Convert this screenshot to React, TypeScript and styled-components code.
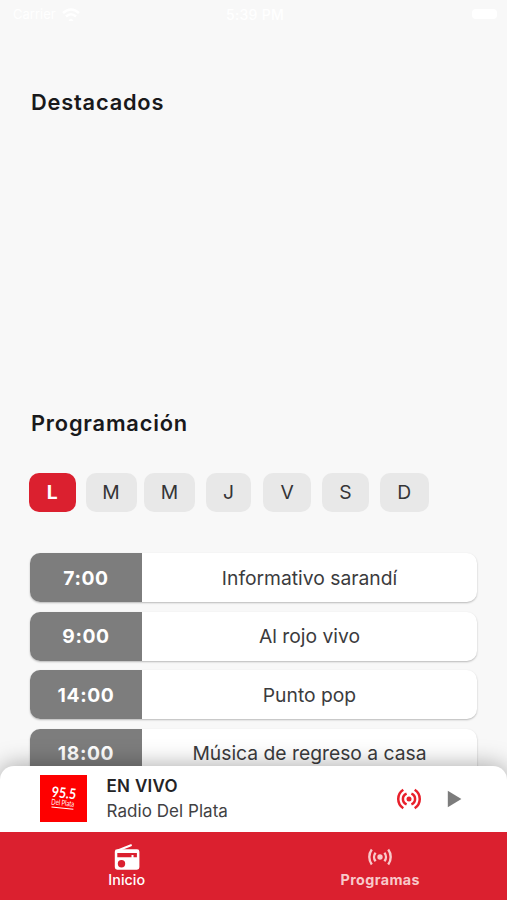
import React from "react";
import styled, { createGlobalStyle } from "styled-components";

const GlobalStyle = createGlobalStyle`
  * { box-sizing: border-box; }
  html, body { margin: 0; padding: 0; background: #f8f8f8; }
  body { font-family: Inter, "Liberation Sans", sans-serif; color: #1c1c1e; overflow: hidden; }
`;

const Screen = styled.main`
  display: flex;
  flex-direction: column;
  width: 507px;
  height: 900px;
  overflow: hidden;
  background: #f8f8f8;
`;

const StatusBar = styled.header`
  flex: none;
  display: grid;
  grid-template-columns: 1fr auto 1fr;
  align-items: center;
  height: 28px;
  padding: 0 10px 0 13px;
  color: #fff;
  font-size: 14px;
`;

const Carrier = styled.div`
  display: flex;
  align-items: center;
  gap: 6px;
  font-size: 13px;
`;

const Clock = styled.time`
  font-weight: 500;
  letter-spacing: 0.3px;
`;

const Battery = styled.span`
  justify-self: end;
  width: 25px;
  height: 10px;
  border-radius: 4px;
  background: #fff;
`;

const Content = styled.div`
  flex: none;
  height: 738px;
  padding: 0 30px;
  overflow: hidden;
`;

const Featured = styled.section`
  height: 321px;
  padding-top: 60px;
`;

const Heading = styled.h2`
  margin: 0 0 0 1px;
  font-size: 21.8px;
  line-height: 28px;
  font-weight: 600;
  letter-spacing: 0.8px;
  color: #19191b;
`;

const Schedule = styled.section`
  padding-top: 60px;
`;

const Days = styled.div`
  display: flex;
  margin: 35.5px 0 41.5px -1px;
`;

const Day = styled.button<{ $width: number; $gap: number; $active?: boolean }>`
  flex: none;
  width: ${(p) => p.$width}px;
  height: 39px;
  margin: 0 ${(p) => p.$gap}px 0 0;
  padding: 0;
  border: 0;
  border-radius: 10px;
  background: ${(p) => (p.$active ? "#db202f" : "#e8e8e8")};
  color: ${(p) => (p.$active ? "#fff" : "#353537")};
  font: ${(p) => (p.$active ? 700 : 400)} 19.3px Inter, sans-serif;
`;

const ProgramList = styled.div`
  display: flex;
  flex-direction: column;
  gap: 9.6px;
`;

const ProgramRow = styled.article`
  flex: none;
  display: grid;
  grid-template-columns: 112px 1fr;
  height: 49px;
  border-radius: 10px;
  overflow: hidden;
  background: #fff;
  box-shadow: 0 1px 2px rgba(0, 0, 0, 0.26);
`;

const Time = styled.div`
  display: grid;
  place-items: center;
  background: #7d7d7d;
  color: #fff;
  font-size: 19.3px;
  font-weight: 700;
  letter-spacing: 0.6px;
`;

const ProgramName = styled.div`
  display: grid;
  place-items: center;
  color: #3b3b3d;
  font-size: 19.3px;
  letter-spacing: 0;
  white-space: nowrap;
`;

const Player = styled.section`
  flex: none;
  position: relative;
  display: flex;
  align-items: center;
  height: 65.5px;
  padding: 0 45px 0 40px;
  border-radius: 14px 14px 0 0;
  background: #fff;
  box-shadow: 0 0 24px rgba(0, 0, 0, 0.36);
`;

const StationLogo = styled.svg`
  flex: none;
  width: 47px;
  height: 47px;
  margin-right: 19.5px;
`;

const Station = styled.div`
  flex: 1;
`;

const LiveLabel = styled.div`
  font-size: 17px;
  font-weight: 600;
  line-height: 25px;
  letter-spacing: 0.3px;
  color: #242426;
`;

const StationName = styled.div`
  font-size: 17px;
  line-height: 25px;
  letter-spacing: 0.05px;
  color: #414143;
`;

const LiveIcon = styled.svg`
  width: 26px;
  height: 26px;
  margin-right: 25px;
`;

const PlayIcon = styled.svg`
  width: 15px;
  height: 18px;
`;

const TabBar = styled.nav`
  flex: none;
  position: relative;
  display: grid;
  grid-template-columns: 1fr 1fr;
  height: 68.5px;
  background: #db202f;
`;

const Tab = styled.a<{ $muted?: boolean }>`
  display: flex;
  flex-direction: column;
  align-items: center;
  padding-top: 11px;
  color: ${(p) => (p.$muted ? "#f8c9ca" : "#fff")};
  font-size: 14.3px;
  font-weight: ${(p) => (p.$muted ? 700 : 500)};
  line-height: 18px;
  letter-spacing: ${(p) => (p.$muted ? 0.4 : 0.05)}px;
`;

const TabIcon = styled.svg`
  width: 28px;
  height: 28px;
  margin-bottom: 0.5px;
`;

const days = [
  { letter: "L", width: 46.5, gap: 10, active: true },
  { letter: "M", width: 51, gap: 7.5 },
  { letter: "M", width: 51, gap: 11 },
  { letter: "J", width: 45, gap: 12.3 },
  { letter: "V", width: 47.7, gap: 10.7 },
  { letter: "S", width: 47.5, gap: 10.5 },
  { letter: "D", width: 49, gap: 0 },
];

const programs = [
  { time: "7:00", name: "Informativo sarandí" },
  { time: "9:00", name: "Al rojo vivo" },
  { time: "14:00", name: "Punto pop" },
  { time: "18:00", name: "Música de regreso a casa" },
];

export default function App() {
  return (
    <Screen>
      <GlobalStyle />
      <StatusBar>
        <Carrier>
          Carrier
          <svg width="18" height="13" viewBox="0 0 18 13" fill="none" stroke="#fff" strokeWidth="2.5">
            <path d="M1 5Q9-2 17 5M4 8.5Q9 4 14 8.5M7.5 11.5L9 13L10.5 11.5" />
          </svg>
        </Carrier>
        <Clock>5:39 PM</Clock>
        <Battery />
      </StatusBar>
      <Content>
        <Featured>
          <Heading>Destacados</Heading>
        </Featured>
        <Schedule>
          <Heading>Programación</Heading>
          <Days>
            {days.map((d, i) => (
              <Day key={i} $width={d.width} $gap={d.gap} $active={d.active}>
                {d.letter}
              </Day>
            ))}
          </Days>
          <ProgramList>
            {programs.map((p) => (
              <ProgramRow key={p.time}>
                <Time>{p.time}</Time>
                <ProgramName>{p.name}</ProgramName>
              </ProgramRow>
            ))}
          </ProgramList>
        </Schedule>
      </Content>
      <Player>
        <StationLogo viewBox="0 0 47 47">
          <rect width="47" height="47" fill="#fe0000" />
          <g transform="rotate(6 23 23)" fill="#fff" fontFamily="Lato, sans-serif" textAnchor="middle">
            <text x="23.5" y="23" fontSize="14.5" fontWeight="700" textLength="24.5" lengthAdjust="spacingAndGlyphs">95.5</text>
            <text x="23.3" y="30.6" fontSize="8" textLength="23" lengthAdjust="spacingAndGlyphs">Del Plata</text>
            <path d="M12.5 33.2H34.5" stroke="#fff" strokeWidth="1" />
          </g>
        </StationLogo>
        <Station>
          <LiveLabel>EN VIVO</LiveLabel>
          <StationName>Radio Del Plata</StationName>
        </Station>
        <LiveIcon viewBox="0 0 26 26" fill="none" stroke="#e8202b" strokeWidth="2.5">
          <circle cx="13" cy="13" r="2.5" fill="#e8202b" stroke="none" />
          <path d="M10.6 7.6A5.8 5.8 0 0 0 10.6 18.4M15.4 7.6A5.8 5.8 0 0 1 15.4 18.4M7.3 3.8A10.9 10.9 0 0 0 7.3 22.2M18.7 3.8A10.9 10.9 0 0 1 18.7 22.2" />
        </LiveIcon>
        <PlayIcon viewBox="0 0 15 18">
          <path d="M.8.7L14.4 9L.8 17.3Z" fill="#7c7c7c" />
        </PlayIcon>
      </Player>
      <TabBar>
        <Tab>
          <TabIcon viewBox="0 0 28 28">
            <path d="M5.4 7.2L18 2.2" stroke="#fff" strokeWidth="2" strokeLinecap="round" />
            <path
              fill="#fff"
              fillRule="evenodd"
              d="M4.2 6.3H24A2.4 2.4 0 0 1 26.4 8.7V24.3A2.4 2.4 0 0 1 24 26.7H4.2A2.4 2.4 0 0 1 1.8 24.3V8.7A2.4 2.4 0 0 1 4.2 6.3ZM4.3 10V14.2H18.5V12H20.5V14.2H23.9V10ZM8.5 17.1A3.7 3.7 0 1 0 8.5 24.5A3.7 3.7 0 1 0 8.5 17.1Z"
            />
          </TabIcon>
          Inicio
        </Tab>
        <Tab $muted>
          <TabIcon viewBox="0 0 28 28" fill="none" stroke="#f8c9ca" strokeWidth="2.4">
            <circle cx="14" cy="14" r="2.7" fill="#f8c9ca" stroke="none" />
            <path d="M9.6 9.7A6.8 6.8 0 0 0 9.6 18.3M18.4 9.7A6.8 6.8 0 0 1 18.4 18.3M5.8 6.6A12.2 12.2 0 0 0 5.8 21.4M22.2 6.6A12.2 12.2 0 0 1 22.2 21.4" />
          </TabIcon>
          Programas
        </Tab>
      </TabBar>
    </Screen>
  );
}
